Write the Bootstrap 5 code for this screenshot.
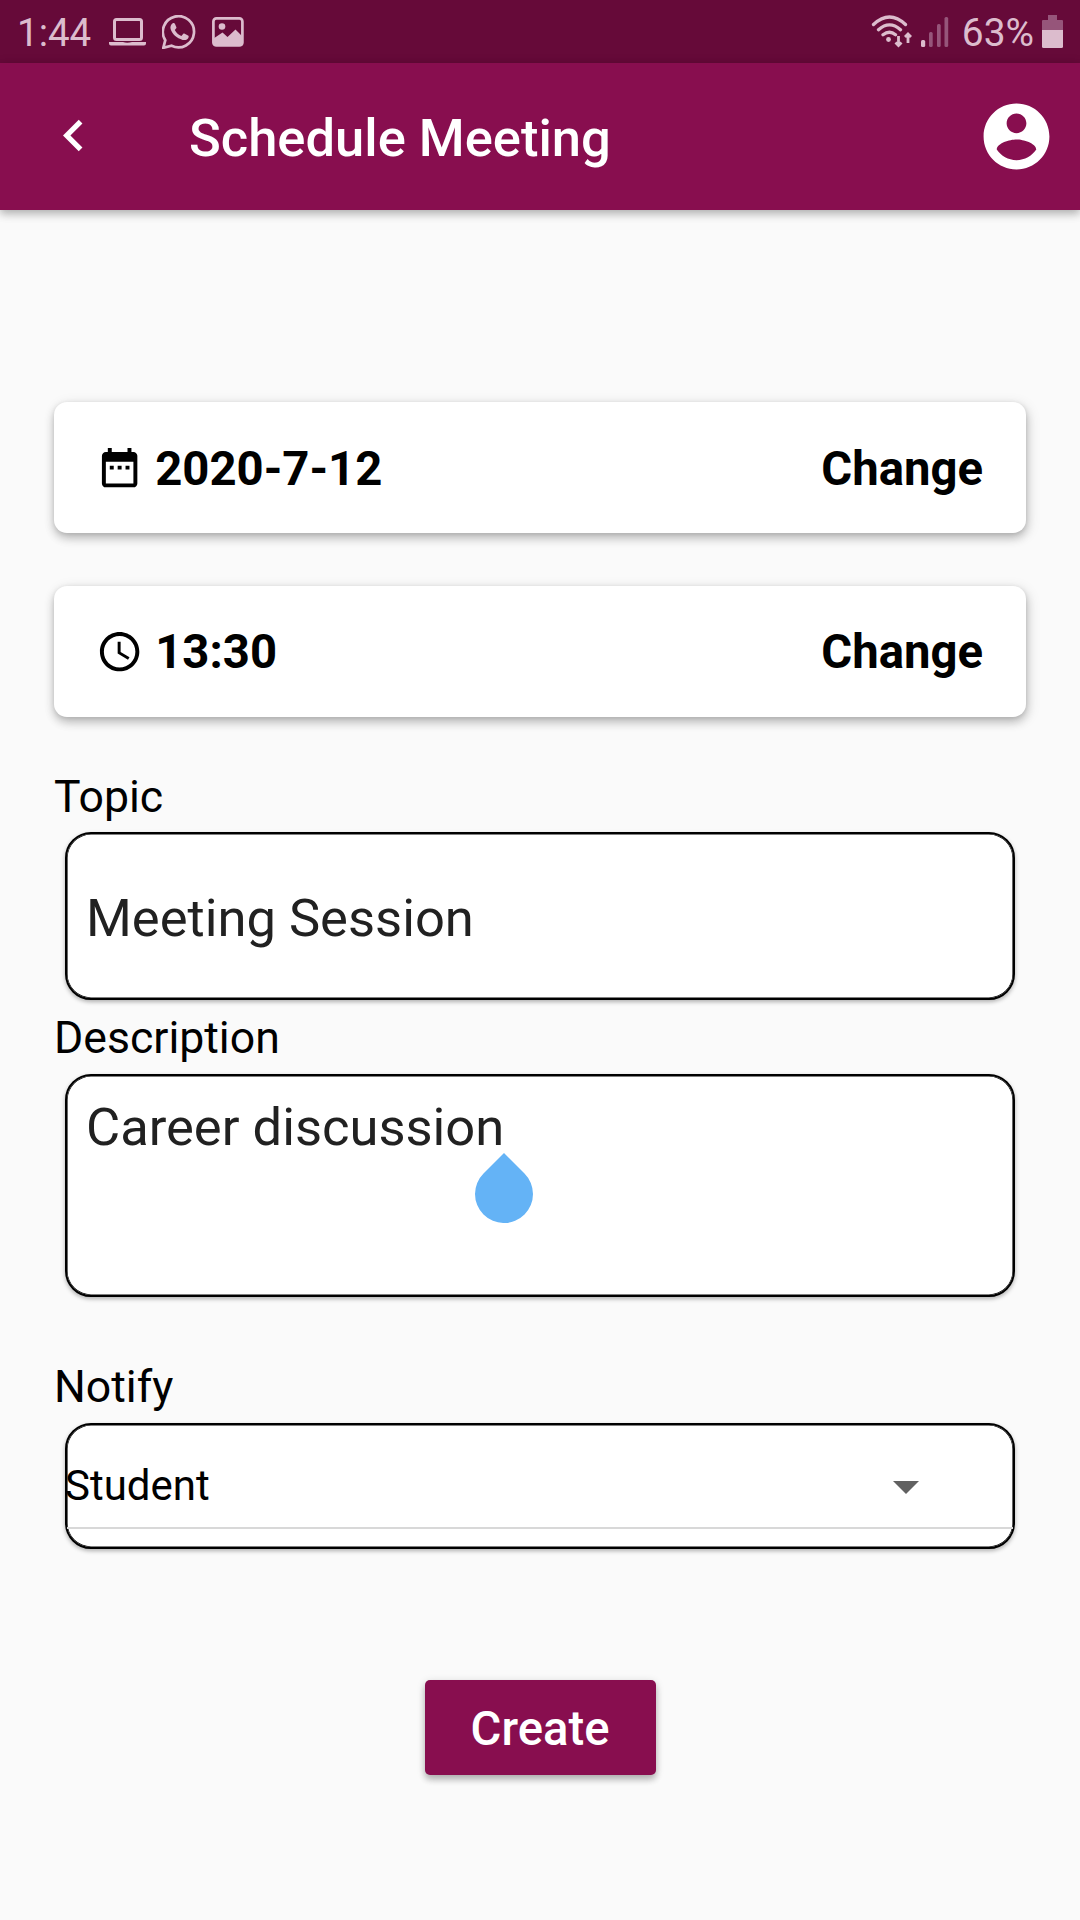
<!DOCTYPE html>
<html lang="en">
<head>
<meta charset="utf-8">
<meta name="viewport" content="width=device-width, initial-scale=1">
<title>Schedule Meeting</title>
<link rel="stylesheet" href="https://cdn.jsdelivr.net/npm/bootstrap@5.3.0/dist/css/bootstrap.min.css">
<style>
  body { font-family: Roboto, "Liberation Sans", sans-serif; background: #fafafa; color: #000; width: 1080px; height: 1920px; overflow: hidden; }
  svg { display: block; flex: none; }
  .status-bar { height: 63px; background: #660a39; color: #dcbccd; padding: 0 17px 0 17px; font-size: 38.5px; line-height: 63px; }
  .status-time { width: 92px; padding-top: 1px; }
  .status-image { margin-left: 16px; }
  .status-signal { margin-left: 7px; }
  .status-pct { margin-left: 13px; padding-top: 1px; font-size: 38.9px; }
  .status-battery { margin-left: 8px; }
  .app-bar { height: 147px; background: #880e4f; padding: 0 24px 0 42px; box-shadow: 0 4px 8px rgba(0,0,0,.22), 0 2px 12px rgba(0,0,0,.12); }
  .back-icon { margin-bottom: 2px; }
  .app-title { font-size: 52.5px; font-weight: 500; line-height: 62px; padding: 3px 0 0 84px; }
  .page-body { padding: 192px 54px 0; }
  .pick-card { height: 131px; border: 0; border-radius: 13px; margin-bottom: 53px; padding: 0 43px 0 42px; font-size: 47.25px; font-weight: 700; line-height: 56px; box-shadow: 0 5px 10px rgba(0,0,0,.2), 2px 3px 14px rgba(0,0,0,.12), 0 1px 4px rgba(0,0,0,.08); }
  .pick-text { padding-top: 2px; }
  .field-label { font-size: 44.6px; line-height: 52px; margin: 0; }
  .first-label { margin-top: 54px; }
  .field-box { margin: 0 11px; background: #fff; border: 2px solid #000; border-radius: 26px; box-shadow: inset 0 0 0 .6px #000, 0 2px 4px rgba(0,0,0,.3); color: #212121; font-size: 52.5px; line-height: 62px; padding: 0 19px; }
  .topic-box { height: 168px; margin-top: 9px; margin-bottom: 12px; padding-top: 3px; }
  .desc-box { height: 223px; margin-top: 10px; margin-bottom: 64px; padding-top: 20px; }
  .drop-handle { position: absolute; left: 407px; top: 76px; }
  .notify-box { height: 126px; margin-top: 10px; padding: 0; color: #000; font-size: 42px; line-height: 50px; }
  .notify-row { height: 104px; border-bottom: 2px solid #d8d8d8; padding: 22px 94px 0 0; }
  .notify-value { margin: -2px 0 0 -2px; }
  .create-btn { width: 231px; height: 95px; margin-top: 131px; padding: 2px 0 0; border: 0; border-radius: 5px; background: #880e4f; color: #fff; font-size: 47.25px; font-weight: 500; line-height: 56px; box-shadow: 0 5px 6px rgba(0,0,0,.2), 0 2px 8px rgba(0,0,0,.16); }
</style>
</head>
<body>
<header>
  <div class="status-bar d-flex align-items-center">
    <span class="status-time">1:44</span>
    <svg width="37" height="28" viewBox="0 0 37 28" fill="none" stroke="#dcbccd" stroke-width="3"><rect x="5.5" y="1.5" width="27" height="20" rx="2"/><path d="M0 24h14q4 1.500 9 0h14v1.500q0 2-2 2H2q-2 0-2-2z" fill="#dcbccd" stroke="none"/></svg>
    <svg class="ms-3" width="34" height="34" viewBox="0 0 34 34"><path d="M1.300 32.800 3.300 25.200A15.600 15.600 0 1 1 9.600 30.800Z" fill="none" stroke="#dcbccd" stroke-width="2.700"/><path d="M10.700 8.300c.9-.5 1.900-.3 2.300.6l1.300 3c.3.7.1 1.100-.3 1.700l-1.200 1.500c1.500 3 3.800 4.900 6.600 6l1.700-2c.5-.6 1-.6 1.600-.3l3.300 1.600c.7.300.8 1 .6 1.800-.6 2.300-3.500 3.400-6 2.700-5.800-1.500-10.600-5.900-12-10.800-.6-2.300.4-4.900 2.100-5.800z" fill="#dcbccd"/></svg>
    <svg class="status-image" width="32" height="30" viewBox="0 0 32 30"><rect x="1.400" y="1.400" width="29" height="27" rx="3" fill="none" stroke="#dcbccd" stroke-width="2.700"/><circle cx="10" cy="9.500" r="3.300" fill="#dcbccd"/><path d="M1.500 21.500 10.500 15.500l5 4.500 8-7.500 7 7V28.500H1.500z" fill="#dcbccd"/></svg>
    <svg class="ms-auto" width="43" height="34" viewBox="0 0 43 34" fill="none" stroke="#dcbccd" stroke-width="3" stroke-linecap="round"><path d="M2.500 9.500Q18.500-5.500 34.500 9.500M7.500 14.700q11-9.700 22 0M12 19.700q6.500-5 12.500 0" stroke-width="3.300"/><circle cx="17.500" cy="24.500" r="2.400" fill="#dcbccd" stroke="none"/><path d="M27.500 21v9M24.500 27.500l3 3 3-3M37 28V19.500M34 22l3-3 3 3" stroke-width="2.800" stroke-linecap="butt"/></svg>
    <svg class="status-signal" width="28" height="32" viewBox="0 0 28 32" fill="#96557a"><rect x="0" y="24" width="4.200" height="7" rx="1.500" fill="#dcbccd"/><rect x="8" y="16" width="3.700" height="15" rx="1.500"/><rect x="16" y="8" width="3.700" height="23" rx="1.500"/><rect x="23.500" y="1" width="3.700" height="30" rx="1.500"/></svg>
    <span class="status-pct">63%</span>
    <svg class="status-battery" width="21" height="33" viewBox="0 0 21 33"><path d="M6 0h9v5h5q1 0 1 1v9H0V6q0-1 1-1h5z" fill="#96557a"/><path d="M0 15h21v16.500q0 1.500-1.500 1.500h-18Q0 33 0 31.500z" fill="#dcbccd"/></svg>
  </div>
  <nav class="app-bar d-flex align-items-center text-white">
    <svg class="back-icon" width="63" height="63" viewBox="0 0 24 24" fill="#fff"><path d="M15.410 7.410 14 6l-6 6 6 6 1.410-1.410L10.830 12z"/></svg>
    <h1 class="app-title m-0">Schedule Meeting</h1>
    <svg class="ms-auto" width="79" height="79" viewBox="0 0 24 24" fill="#fff"><path d="M12 2C6.480 2 2 6.480 2 12s4.480 10 10 10 10-4.480 10-10S17.520 2 12 2zm0 3c1.660 0 3 1.340 3 3s-1.340 3-3 3-3-1.340-3-3 1.340-3 3-3zm0 14.200c-2.500 0-4.710-1.280-6-3.220.030-1.990 4-3.080 6-3.080 1.990 0 5.970 1.090 6 3.080-1.290 1.940-3.500 3.220-6 3.220z"/></svg>
  </nav>
</header>
<main class="page-body">
  <div class="card pick-card flex-row align-items-center">
    <svg width="47.250" height="47.250" viewBox="0 0 24 24"><path d="M9 11H7v2h2v-2zm4 0h-2v2h2v-2zm4 0h-2v2h2v-2zm2-7h-1V2h-2v2H8V2H6v2H5c-1.110 0-1.990.900-1.990 2L3 20c0 1.100.890 2 2 2h14c1.100 0 2-.900 2-2V6c0-1.100-.900-2-2-2zm0 16H5V9h14v11z"/></svg>
    <span class="pick-text ms-2 ps-1">2020-7-12</span><span class="pick-text ms-auto">Change</span>
  </div>
  <div class="card pick-card flex-row align-items-center">
    <svg width="47.250" height="47.250" viewBox="0 0 24 24"><path d="M11.990 2C6.470 2 2 6.480 2 12s4.470 10 9.990 10C17.520 22 22 17.520 22 12S17.520 2 11.990 2zM12 20c-4.420 0-8-3.580-8-8s3.580-8 8-8 8 3.580 8 8-3.580 8-8 8zm.500-13H11v6l5.250 3.150.750-1.230-4.500-2.670z"/></svg>
    <span class="ms-2 ps-1">13:30</span><span class="ms-auto">Change</span>
  </div>
  <p class="field-label first-label">Topic</p>
  <div class="field-box topic-box d-flex align-items-center">Meeting Session</div>
  <p class="field-label">Description</p>
  <div class="field-box desc-box position-relative">Career discussion
    <svg class="drop-handle" width="60" height="71" viewBox="0 0 60 71"><path d="M30 1 9.500 21.500a29 29 0 1 0 41 0z" fill="#64b3f6"/></svg>
  </div>
  <p class="field-label">Notify</p>
  <div class="field-box notify-box">
    <div class="notify-row d-flex justify-content-between align-items-center"><span class="notify-value">Student</span><svg width="26" height="13" viewBox="0 0 26 13"><path d="M0 0h26L13 13z" fill="#616161"/></svg></div>
  </div>
  <button class="btn create-btn d-block mx-auto" type="button">Create</button>
</main>
<script src="https://cdn.jsdelivr.net/npm/bootstrap@5.3.0/dist/js/bootstrap.bundle.min.js"></script>
</body>
</html>
